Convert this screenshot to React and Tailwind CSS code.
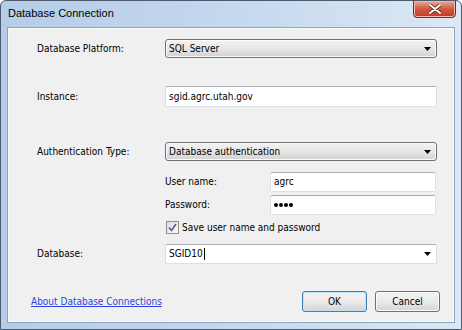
import React, { useState } from 'react';

const font = { fontFamily: '"DejaVu Sans Condensed", "DejaVu Sans", "Liberation Sans", sans-serif', fontStretch: 'condensed' };

const Arrow = () => (
  <svg width="7" height="4" viewBox="0 0 7 4" className="block">
    <path d="M0 0 H7 L3.5 4 Z" fill="#000" />
  </svg>
);

const Combo = ({ value }) => (
  <div className="flex-1 h-[19px] flex items-center justify-between pl-[3px] pr-[5px] rounded-[3px] border border-[#707070] bg-gradient-to-b from-[#f3f3f3] via-[#e6e6e6] to-[#d2d2d2] shadow-[inset_0_0_0_1px_#fcfcfc]">
    <span className="text-[10px] text-black leading-none">{value}</span>
    <Arrow />
  </div>
);

const TextBox = ({ value, className = '', children }) => (
  <div className={`h-[20px] flex items-center pl-[3px] pr-[5px] bg-white border border-[#dbdfe6] border-t-[#abadb3] rounded-[2px] ${className}`}>
    {children || <span className="text-[10px] text-black leading-none">{value}</span>}
  </div>
);

const Row = ({ label, children, className = '' }) => (
  <div className={`flex items-center pl-[29px] pr-[17px] ${className}`}>
    <span className="w-[128px] shrink-0 text-[10px] text-black leading-none">{label}</span>
    {children}
  </div>
);

const Button = ({ label, focused }) => (
  <div
    className={`w-[65px] h-[21px] flex items-center justify-center rounded-[3px] border text-[10px] text-black bg-gradient-to-b from-[#f2f2f2] via-[#ebebeb] to-[#d4d4d4] ${
      focused
        ? 'border-[#3c7fb1] shadow-[inset_0_0_0_1px_#bfe4f6]'
        : 'border-[#707070] shadow-[inset_0_0_0_1px_#fbfbfb]'
    }`}
  >
    {label}
  </div>
);

const App = () => {
  const [save, setSave] = useState(true);

  return (
    <div
      className="w-[462px] h-[330px] flex flex-col border border-[#4b5a6c] rounded-t-[6px] bg-gradient-to-r from-[#b5cde8] via-[#c4d8ee] to-[#dce8f4] overflow-hidden"
      style={font}
    >
      <div className="h-[26px] shrink-0 flex items-start justify-between pl-[7px] pr-[5px]">
        <span
          className="mt-[4px] text-black"
          style={{ fontFamily: '"Liberation Sans", Arial, sans-serif', fontSize: '11px', fontStretch: 'normal' }}
        >
          Database Connection
        </span>
        <div className="w-[43px] h-[18px] -mt-px flex items-center justify-center rounded-b-[4px] border border-[#7a2a20] bg-gradient-to-b from-[#e9a99c] via-[#d0583f] to-[#c03a22] shadow-[inset_0_0_0_1px_#f2b7a9]">
          <svg width="12" height="10" viewBox="0 0 12 10">
            <path d="M1 1 L11 9 M11 1 L1 9" stroke="#5a1c14" strokeWidth="3.4" strokeLinecap="round" />
            <path d="M1 1 L11 9 M11 1 L1 9" stroke="#fff" strokeWidth="2" strokeLinecap="round" />
          </svg>
        </div>
      </div>

      <div className="flex-1 mx-[6px] mb-[6px] border border-[#8da4c0] bg-[#f0f0f0] shadow-[inset_0_0_0_1px_#fafafa] flex flex-col">
        <Row label="Database Platform:" className="mt-[11px]">
          <Combo value="SQL Server" />
        </Row>

        <Row label="Instance:" className="mt-[28px]">
          <TextBox value="sgid.agrc.utah.gov" className="flex-1 h-[21px]" />
        </Row>

        <Row label="Authentication Type:" className="mt-[35px]">
          <Combo value="Database authentication" />
        </Row>

        <div className="flex items-center pl-[157px] pr-[18px] mt-[11px]">
          <span className="w-[105px] shrink-0 text-[10px] text-black leading-none">User name:</span>
          <TextBox value="agrc" className="flex-1" />
        </div>

        <div className="flex items-center pl-[157px] pr-[18px] mt-[3px]">
          <span className="w-[105px] shrink-0 text-[10px] text-black leading-none">Password:</span>
          <TextBox className="flex-1">
            <span className="flex gap-[1px]">
              {[0, 1, 2, 3].map((i) => (
                <span key={i} className="w-[4px] h-[4px] rounded-full bg-black" />
              ))}
            </span>
          </TextBox>
        </div>

        <div
          className="flex items-center pl-[158px] mt-[6px] cursor-default"
          onClick={() => setSave(!save)}
        >
          <span className="w-[13px] h-[13px] border border-[#8e8f8f] bg-gradient-to-br from-[#dcdcdc] to-[#fbfbfb] flex items-center justify-center">
            {save && (
              <svg width="9" height="9" viewBox="0 0 9 9">
                <path d="M1 4.5 L3.5 7.5 L8 1" fill="none" stroke="#4a5f97" strokeWidth="1.6" />
              </svg>
            )}
          </span>
          <span className="ml-[3px] text-[10px] text-black leading-none">Save user name and password</span>
        </div>

        <Row label="Database:" className="mt-[10px]">
          <TextBox className="flex-1 justify-between">
            <span className="text-[10px] text-black leading-none flex items-center">
              SGID10<span className="ml-px w-px h-[12px] bg-black" />
            </span>
            <Arrow />
          </TextBox>
        </Row>

        <div className="flex items-center justify-between pl-[23px] pr-[14px] mt-[27px]">
          <a href="#" className="text-[10px] text-[#2d43e0] underline leading-none">
            About Database Connections
          </a>
          <div className="flex gap-[8px]">
            <Button label="OK" focused />
            <Button label="Cancel" />
          </div>
        </div>
      </div>
    </div>
  );
};

export default App;
